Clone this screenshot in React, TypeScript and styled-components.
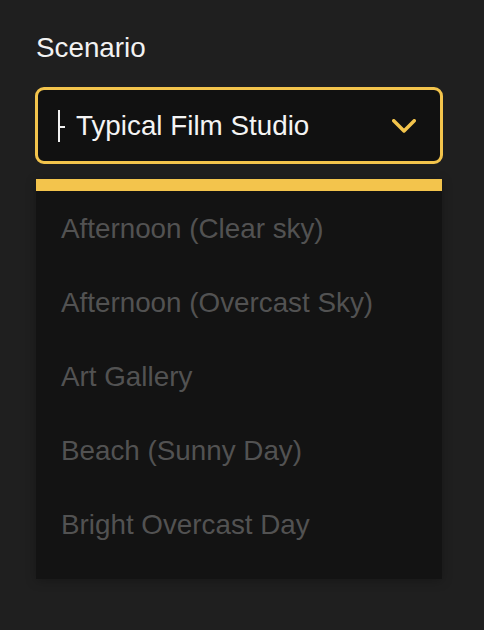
import React from 'react';
import styled, { createGlobalStyle } from 'styled-components';

const GlobalStyle = createGlobalStyle`
  html, body {
    margin: 0;
    padding: 0;
    background: #1f1f1f;
  }
  body {
    font-family: "Liberation Sans", Arial, Helvetica, sans-serif;
  }
`;

const Page = styled.div`
  width: 484px;
  min-height: 630px;
  box-sizing: border-box;
  padding: 32px 41px 0 35px;
  background: #1f1f1f;
`;

const Label = styled.div`
  color: #f2f2f2;
  font-size: 27.8px;
  line-height: 32px;
  padding-left: 1px;
  margin-bottom: 23px;
`;

const SelectBox = styled.div`
  display: flex;
  align-items: center;
  height: 77px;
  box-sizing: border-box;
  padding: 0 24px 0 20px;
  border: 3px solid #f3c44c;
  border-radius: 9px;
  background: #111111;
`;

const Caret = styled.span`
  position: relative;
  width: 2px;
  height: 32px;
  margin-right: 16px;
  background: #f2f2f2;
  flex: none;

  &::after {
    content: '';
    position: absolute;
    left: 2px;
    top: 16px;
    width: 5px;
    height: 2px;
    background: #f2f2f2;
  }
`;

const Value = styled.span`
  flex: 1 1 0%;
  color: #f4f4f4;
  font-size: 27.8px;
  white-space: nowrap;
`;

const Chevron = () => (
  <svg width="24" height="14" viewBox="0 0 24 14" fill="none">
    <polyline
      points="1.75,1.75 12,12 22.25,1.75"
      stroke="#f3c44c"
      strokeWidth="3.5"
      strokeLinecap="round"
      strokeLinejoin="round"
    />
  </svg>
);

const Dropdown = styled.div`
  margin: 15px 1px 0 1px;
  box-shadow: 0 2px 10px rgba(0, 0, 0, 0.25);
`;

const Accent = styled.div`
  height: 12px;
  background: #f3c44c;
`;

const List = styled.ul`
  list-style: none;
  margin: 0;
  padding: 1px 0 17px;
  background: #131313;
`;

const Item = styled.li`
  height: 74px;
  line-height: 74px;
  padding-left: 25px;
  color: #525252;
  font-size: 27.8px;
  white-space: nowrap;
`;

const options = [
  'Afternoon (Clear sky)',
  'Afternoon (Overcast Sky)',
  'Art Gallery',
  'Beach (Sunny Day)',
  'Bright Overcast Day',
];

export default function App() {
  return (
    <>
      <GlobalStyle />
      <Page>
        <Label>Scenario</Label>
        <SelectBox>
          <Caret />
          <Value>Typical Film Studio</Value>
          <Chevron />
        </SelectBox>
        <Dropdown>
          <Accent />
          <List>
            {options.map((o) => (
              <Item key={o}>{o}</Item>
            ))}
          </List>
        </Dropdown>
      </Page>
    </>
  );
}
